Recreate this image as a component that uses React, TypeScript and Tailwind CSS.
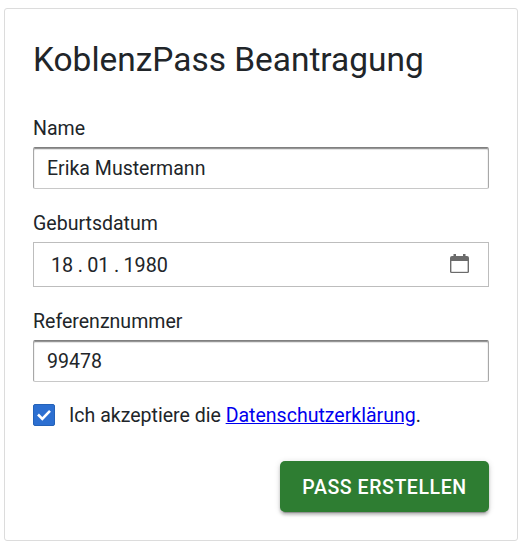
import React from 'react';

function TextField({ label, value }: { label: string; value: string }) {
  return (
    <label className="block">
      <span className="block h-[26px] text-[19.55px] leading-[28px]">{label}</span>
      <input
        type="text"
        defaultValue={value}
        className="mt-[6px] block h-[42px] w-full rounded-[2px] border border-t-[#808080] border-r-[#a8a8a8] border-b-[#c8c8c8] border-l-[#a8a8a8] bg-white px-[13px] text-[19.55px] shadow-[inset_0_1px_1px_#8c8c8c,inset_0_2px_1px_#ededed] outline-none"
      />
    </label>
  );
}

function CalendarIcon() {
  return (
    <svg width="19" height="20" viewBox="0 0 19 20" fill="none" className="-mt-px">
      <path d="M2 2H17Q19 2 19 4V17.5Q19 19 17.5 19H1.5Q0 19 0 17.5V4Q0 2 2 2Z" fill="#6b6b6b" />
      <rect x="3.5" y="0" width="2.5" height="3" fill="#6b6b6b" />
      <rect x="13" y="0" width="2.5" height="3" fill="#6b6b6b" />
      <rect x="1.4" y="7" width="16.2" height="10.8" fill="white" />
    </svg>
  );
}

export default function App() {
  return (
    <main className="h-[550px] w-[527px] bg-white pt-[8px] pl-[4px] font-['Roboto',sans-serif] text-[#212529]">
      <form className="h-[533px] w-[514px] rounded-[3px] border border-[#dcdcdc] px-[28px] pt-[30px]">
        <h1 className="h-[40px] text-[33.45px] leading-[42px] whitespace-nowrap">KoblenzPass Beantragung</h1>
        <div className="mt-[36px]">
          <TextField label="Name" value="Erika Mustermann" />
        </div>
        <div className="mt-[21px]">
          <div className="h-[26px] text-[19.55px] leading-[28px]">Geburtsdatum</div>
          <div className="mt-[6px] flex h-[45px] items-center justify-between border border-[#bdbdbd] pr-[19px] pl-[17px] text-[19.8px]">
            <div className="flex pt-[2px] whitespace-pre">
              <span>18</span>
              <span className="w-[14px] text-center">.</span>
              <span>01</span>
              <span className="w-[14px] text-center">.</span>
              <span>1980</span>
            </div>
            <CalendarIcon />
          </div>
        </div>
        <div className="mt-[21px]">
          <TextField label="Referenznummer" value="99478" />
        </div>
        <div className="mt-[20px] flex h-[26px] items-center">
          <span className="flex size-[22px] items-center justify-center rounded-[2px] border border-[#2462b8] bg-[#2c6fd1]">
            <svg width="16" height="16" viewBox="0 0 16 16" fill="none">
              <path d="M2 7.5L6.3 11.8L14 3.8" stroke="white" strokeWidth="2.6" />
            </svg>
          </span>
          <span className="ml-[14px] pt-[2px] text-[19.55px] whitespace-nowrap">
            Ich akzeptiere die <a href="#" className="text-[#0000ee] underline">Datenschutzerklärung</a>.
          </span>
        </div>
        <div className="mt-[33px] flex justify-end">
          <button type="button" className="h-[51px] w-[209px] rounded-[5px] bg-[#2e7d32] pt-[2px] text-[19.5px] font-medium tracking-[0.57px] text-white shadow-[0_4px_1px_-3px_rgba(0,0,0,0.25),0_3px_3px_rgba(0,0,0,0.2),0_1px_6px_rgba(0,0,0,0.14)]">
            PASS ERSTELLEN
          </button>
        </div>
      </form>
    </main>
  );
}
